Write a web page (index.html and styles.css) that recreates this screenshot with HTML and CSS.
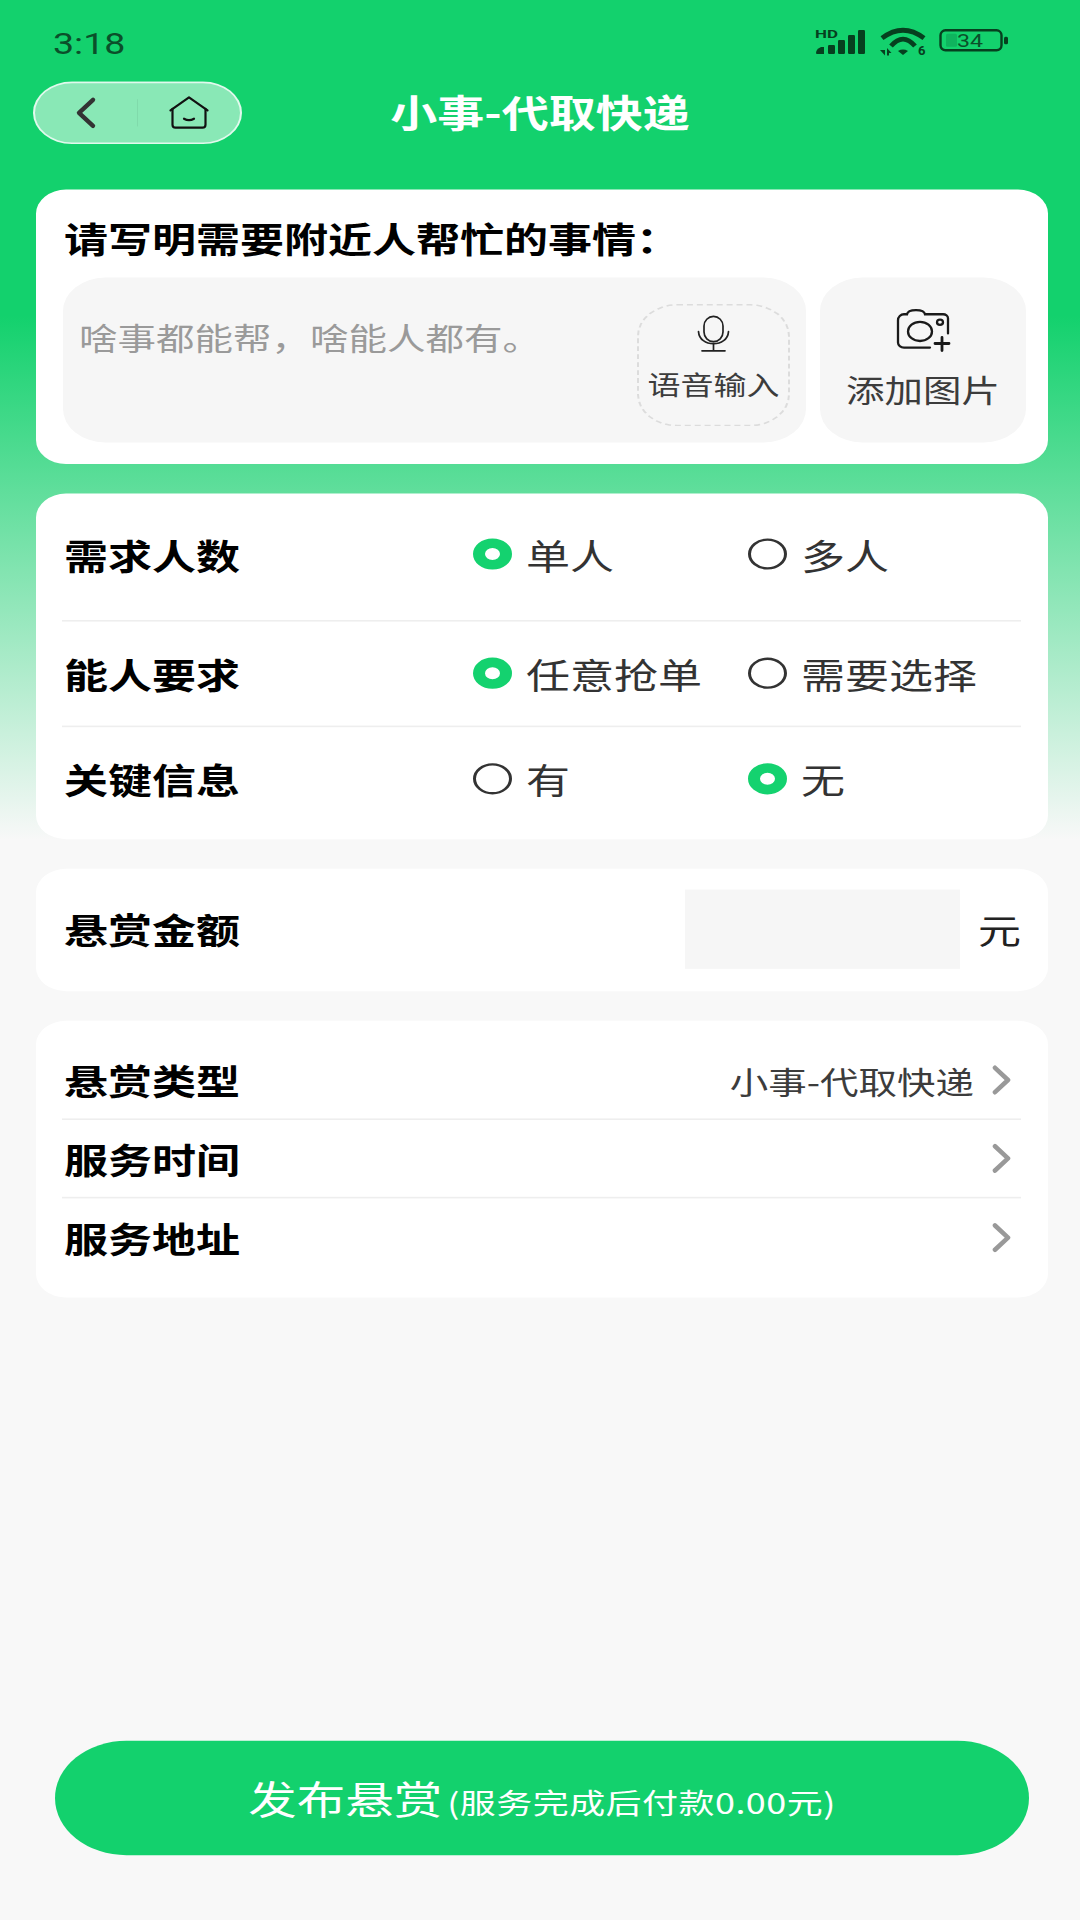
FILE: index.html
```html
<!DOCTYPE html>
<html lang="zh-CN">
<head>
<meta charset="utf-8">
<title>小事-代取快递</title>
<link rel="stylesheet" href="styles.css">
</head>
<body>
<div class="screen">
<div class="stage">
  <div class="status">
    <span class="time">3:18</span>
    <div class="status-icons">
      <svg class="ic-signal" viewBox="0 0 52 28" preserveAspectRatio="none">
        <text x="0" y="9.5" class="sv-hd" textLength="23" lengthAdjust="spacingAndGlyphs">HD</text>
        <path d="M2 26 a1 1 0 0 1-1-1 q0-4 5-6 h3 v7z"/>
        <rect x="13" y="17" width="7" height="9" rx="1.2"/>
        <rect x="23" y="12" width="7" height="14" rx="1.2"/>
        <rect x="33" y="7" width="7" height="19" rx="1.2"/>
        <rect x="43" y="2" width="7" height="24" rx="1.2"/>
      </svg>
      <svg class="ic-wifi" viewBox="0 0 48 29" preserveAspectRatio="none">
        <path class="sv-line" d="M3 11 Q24 -5 45 11"/>
        <path class="sv-line" d="M12 19 Q24 5 36 19"/>
        <path d="M19 24 Q24 21 29 24 L24 28Z"/>
        <path d="M1 23 L6 23 L6 28.5Z M8 28.5 L8 21 L12.5 26 L10 26 L10 28.5Z"/>
        <text x="39" y="28.5" class="sv-six">6</text>
      </svg>
      <svg class="ic-batt" viewBox="0 0 70 24" preserveAspectRatio="none">
        <rect x="1.5" y="1.5" width="61" height="20" rx="5" class="sv-line sv-thin"/>
        <rect x="7" y="5" width="11" height="13" rx="1.5" class="sv-fill"/>
        <text x="18" y="18" class="sv-pct" textLength="26" lengthAdjust="spacingAndGlyphs">34</text>
        <rect x="65" y="8" width="4" height="7.5" rx="1.5"/>
      </svg>
    </div>
  </div>

  <div class="header">
    <div class="capsule">
      <div class="cap-cell">
        <svg class="ic-back" viewBox="0 0 22 32" preserveAspectRatio="none"><polyline points="18,3 4,16 18,29"/></svg>
      </div>
      <div class="cap-divider"></div>
      <div class="cap-cell">
        <svg class="ic-home" viewBox="0 0 40 34" preserveAspectRatio="none">
          <path d="M1.5 14.5 L20 1.5 L38.5 14.5"/>
          <path d="M3.5 13 V29 a3 3 0 0 0 3 3 H33.5 a3 3 0 0 0 3-3 V13"/>
          <path d="M15 23 Q20 26 25 23"/>
        </svg>
      </div>
    </div>
    <h1 class="title">小事-代取快递</h1>
  </div>

  <section class="card card-need">
    <h2 class="need-title">请写明需要附近人帮忙的事情：</h2>
    <div class="need-row">
      <div class="need-box">
        <p class="placeholder">啥事都能帮，啥能人都有。</p>
        <div class="voice">
          <svg class="ic-mic" viewBox="0 0 35 38" preserveAspectRatio="none">
            <rect x="8" y="2" width="19" height="25" rx="9.5"/>
            <path d="M2.5 17 C3 25 10 29 17.5 29 C25 29 32 25 32.5 17"/>
            <path d="M17.5 29 V36 M6 36 H29"/>
          </svg>
          <span class="voice-label">语音输入</span>
        </div>
      </div>
      <div class="photo-box">
        <svg class="ic-camera" viewBox="0 0 60 46" preserveAspectRatio="none">
          <path d="M35 40 H9 a6 5 0 0 1-6-5 V13 a6 6 0 0 1 6-6 H12 C13 1.5 29 1.5 30 7 H48 a5 4 0 0 1 5 4 V26"/>
          <ellipse cx="25" cy="24" rx="12" ry="9.5"/>
          <ellipse cx="45" cy="15" rx="3" ry="2.6"/>
          <path class="plus" d="M40 36 H54 M47 30 V43"/>
        </svg>
        <span class="photo-label">添加图片</span>
      </div>
    </div>
  </section>

  <section class="card card-opts">
    <div class="opt-row opt-a">
      <span class="label">需求人数</span>
      <span class="opt"><i class="radio on"></i>单人</span>
      <span class="opt"><i class="radio"></i>多人</span>
    </div>
    <div class="opt-row opt-b">
      <span class="label">能人要求</span>
      <span class="opt"><i class="radio on"></i>任意抢单</span>
      <span class="opt"><i class="radio"></i>需要选择</span>
    </div>
    <div class="opt-row opt-c">
      <span class="label">关键信息</span>
      <span class="opt"><i class="radio"></i>有</span>
      <span class="opt"><i class="radio on"></i>无</span>
    </div>
  </section>

  <section class="card card-money">
    <span class="label">悬赏金额</span>
    <div class="money-input"></div>
    <span class="unit">元</span>
  </section>

  <section class="card card-list">
    <div class="list-row">
      <span class="label">悬赏类型</span>
      <span class="value">小事-代取快递</span>
      <svg class="ic-chev" viewBox="0 0 20 30" preserveAspectRatio="none"><polyline points="3,3 16,15 3,27"/></svg>
    </div>
    <div class="list-row">
      <span class="label">服务时间</span>
      <svg class="ic-chev" viewBox="0 0 20 30" preserveAspectRatio="none"><polyline points="3,3 16,15 3,27"/></svg>
    </div>
    <div class="list-row">
      <span class="label">服务地址</span>
      <svg class="ic-chev" viewBox="0 0 20 30" preserveAspectRatio="none"><polyline points="3,3 16,15 3,27"/></svg>
    </div>
  </section>

  <div class="submit">
    <span class="submit-main">发布悬赏</span><span class="submit-sub">(服务完成后付款0.00元)</span>
  </div>
</div>
</div>
</body>
</html>
```

FILE: styles.css
```css
* { box-sizing: border-box; }
html, body { margin: 0; padding: 0; width: 1080px; height: 1920px; overflow: hidden; background: #f8f8f8; }
body { font-family: "Noto Sans CJK SC", "Noto Sans", sans-serif; }

.screen { width: 1080px; height: 1920px; overflow: hidden; }

/* the screen is a 1080x2400 layout squeezed to 1920 tall */
.stage {
  width: 1080px;
  height: 2400px;
  transform: scaleY(.8);
  transform-origin: 0 0;
  display: flex;
  flex-direction: column;
  background: linear-gradient(#13d16d 395px, #f8f8f8 1050px);
}

.status { height: 102px; display: flex; justify-content: space-between; padding: 27px 71px 0 53px; flex: none; }
.time { font-family: Roboto, sans-serif; font-size: 37.5px; line-height: 54px; color: #0b4f2a; }
.status-icons { display: flex; align-items: flex-start; gap: 12px; padding-top: 8px; }
.status-icons svg { fill: #06401f; display: block; overflow: visible; }
.ic-signal { width: 52px; height: 35px; }
.ic-wifi { width: 48px; height: 36px; margin-top: -1px; }
.ic-batt { width: 70px; height: 30px; margin-top: 1px; }
.sv-line { fill: none !important; stroke: #06401f; stroke-width: 4.8; stroke-linecap: butt; }
.sv-thin { stroke-width: 2.4; }
.sv-fill { fill: #0fb45e; }
.sv-hd { font: 700 11.5px Roboto, sans-serif; }
.sv-six { font: 700 13px Roboto, sans-serif; }
.sv-pct { font: 400 18px Roboto, sans-serif; fill: #0b4f2a; }

.header { display: grid; grid-template-columns: 1fr auto 1fr; align-items: center; padding: 0 33px; height: 78px; flex: none; }
.capsule { width: 209px; height: 78px; border: 2px solid rgba(255,255,255,.75); border-radius: 40px; background: rgba(255,255,255,.5); display: flex; align-items: center; }
.cap-cell { flex: 1; display: flex; justify-content: center; }
.cap-divider { width: 1px; height: 34px; background: rgba(0,0,0,.06); }
.ic-back { width: 22px; height: 40px; fill: none; stroke: #333; stroke-width: 4.4; stroke-linecap: round; stroke-linejoin: round; }
.ic-home { width: 40px; height: 42px; fill: none; stroke: #111; stroke-width: 2.2; stroke-linecap: round; stroke-linejoin: round; }
.title { grid-column: 2; margin: 0 0 4px; font-size: 47px; font-weight: 700; line-height: 60px; color: #fff; white-space: nowrap; }

.card { background: #fff; border-radius: 30px; margin: 0 32px 37px 36px; flex: none; }

.card-need { margin-top: 57px; height: 343px; padding: 27px 22px 0 28px; }
.need-title { margin: 0; font-size: 44px; line-height: 66px; font-weight: 700; color: #000; white-space: nowrap; }
.need-row { display: flex; gap: 14px; margin-top: 17px; margin-left: -1px; height: 206px; }
.need-box { width: 743px; background: #f6f6f6; border-radius: 42px; display: flex; justify-content: space-between; padding: 33px 16px 0 16px; }
.placeholder { margin: 11px 0 0; font-size: 38.5px; line-height: 60px; color: #9a9a9a; white-space: nowrap; }
.voice { width: 153px; height: 153px; border: 2px dashed #dcdcdc; border-radius: 40px; display: flex; flex-direction: column; align-items: center; padding-top: 11px; }
.ic-mic { width: 35px; height: 48px; fill: none; stroke: #222; stroke-width: 1.7; stroke-linecap: round; display: block; }
.voice-label { font-size: 33px; line-height: 46px; color: #3c3c3c; white-space: nowrap; margin-top: 16px; }
.photo-box { flex: 1; background: #f6f6f6; border-radius: 42px; display: flex; flex-direction: column; align-items: center; padding-top: 37px; }
.ic-camera { width: 60px; height: 58px; fill: none; stroke: #1a1a1a; stroke-width: 2.3; stroke-linecap: round; display: block; margin-left: 4px; }
.ic-camera .plus { stroke-width: 2.8; }
.photo-label { font-size: 38.5px; line-height: 56px; color: #3c3c3c; white-space: nowrap; margin-top: 16px; }

.label { font-size: 44px; font-weight: 700; color: #000; line-height: 60px; white-space: nowrap; padding-left: 2px; }

.card-opts { padding: 0 27px 0 26px; height: 432px; }
.opt-row { display: grid; grid-template-columns: 411px 275px 1fr; align-items: center; }
.opt-a { height: 160px; padding-bottom: 7px; border-bottom: 2px solid #eeeeee; }
.opt-b { height: 132px; padding-bottom: 1px; border-bottom: 2px solid #eeeeee; }
.opt-c { height: 140px; padding-bottom: 11px; }
.opt { display: flex; align-items: center; gap: 14px; font-size: 44px; color: #333; white-space: nowrap; line-height: 60px; }
.radio { width: 39px; height: 39px; border-radius: 50%; border: 3px solid #333; flex: none; }
.radio.on { border: 12.5px solid #14d26f; background: #fff; }

.card-money { height: 153px; padding: 0 27px 3px 26px; display: flex; align-items: center; }
.money-input { width: 275px; height: 99px; margin-left: auto; margin-top: 1px; margin-right: 1px; background: #f6f6f6; }
.unit { font-size: 43px; color: #222; margin-left: 17px; line-height: 60px; }

.card-list { height: 346px; padding: 26px 27px 26px 26px; }
.list-row { height: 98px; display: flex; align-items: center; border-bottom: 2px solid #eeeeee; }
.list-row:last-child { border-bottom: 0; }
.value { margin-left: auto; font-size: 38.5px; color: #3c3c3c; white-space: nowrap; }
.ic-chev { width: 20px; height: 38px; fill: none; stroke: #999; stroke-width: 4.6; stroke-linecap: round; stroke-linejoin: round; margin-left: 18px; margin-right: 9px; flex: none; }
.list-row > .label + .ic-chev { margin-left: auto; }

.submit { margin: auto 51px 81px 55px; height: 143px; border-radius: 72px / 72px; background: #13d16d; color: #fff; display: flex; align-items: baseline; justify-content: center; line-height: 143px; flex: none; }
.submit-main { font-size: 48.5px; }
.submit-sub { font-size: 36px; margin-left: 5px; letter-spacing: .45px; }
```
